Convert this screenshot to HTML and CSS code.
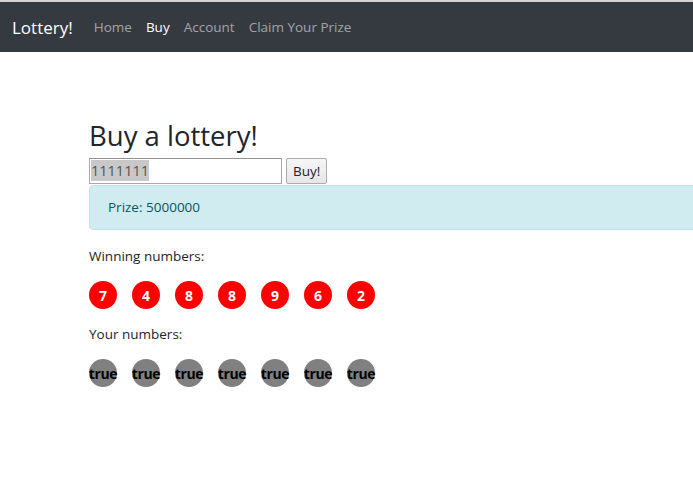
FILE: index.html
```html
<!DOCTYPE html>
<html lang="en">
<head>
<meta charset="utf-8">
<title>Lottery!</title>
<link rel="stylesheet" href="styles.css">
</head>
<body>
<nav class="navbar">
  <a class="brand" href="#">Lottery!</a>
  <ul class="nav">
    <li><a class="nav-link" href="#">Home</a></li>
    <li><a class="nav-link active" href="#">Buy</a></li>
    <li><a class="nav-link" href="#">Account</a></li>
    <li><a class="nav-link" href="#">Claim Your Prize</a></li>
  </ul>
</nav>
<main class="content">
  <h2 class="title">Buy a lottery!</h2>
  <form class="buy-form">
    <div class="fake-input"><span class="selected">1111111</span></div>
    <button type="button" class="buy-btn">Buy!</button>
  </form>
  <div class="alert">Prize: 5000000</div>
  <p class="label first">Winning numbers:</p>
  <div class="balls">
    <span class="ball red">7</span>
    <span class="ball red">4</span>
    <span class="ball red">8</span>
    <span class="ball red">8</span>
    <span class="ball red">9</span>
    <span class="ball red">6</span>
    <span class="ball red">2</span>
  </div>
  <p class="label">Your numbers:</p>
  <div class="balls">
    <span class="ball grey">true</span>
    <span class="ball grey">true</span>
    <span class="ball grey">true</span>
    <span class="ball grey">true</span>
    <span class="ball grey">true</span>
    <span class="ball grey">true</span>
    <span class="ball grey">true</span>
  </div>
</main>
</body>
</html>
```
FILE: styles.css
```css
html, body {
  margin: 0;
  padding: 0;
}
body {
  font-family: "Open Sans", "Noto Sans", sans-serif;
  font-size: 13.5px;
  color: #212529;
  background: #fff;
  overflow-x: hidden;
  border-top: 2px solid #d4d4d4;
}
.navbar {
  height: 50px;
  background: #343a40;
  display: flex;
  align-items: center;
  padding: 0 12px;
}
.brand {
  color: #fff;
  text-decoration: none;
  font-size: 17px;
  margin-right: 14px;
}
.nav {
  display: flex;
  list-style: none;
  margin: 0;
  padding: 0;
}
.nav-link {
  display: block;
  color: rgba(255,255,255,.55);
  text-decoration: none;
  font-size: 13.5px;
  padding: 0 7px;
}
.nav-link.active {
  color: #fff;
}
.content {
  padding-left: 89px;
  padding-top: 64px;
  overflow: hidden;
}
.title {
  margin: 0;
  font-size: 27.5px;
  font-weight: 400;
  line-height: 40px;
}
.buy-form {
  display: flex;
  align-items: center;
  gap: 4px;
  margin-top: 2px;
}
.fake-input {
  width: 189px;
  height: 22px;
  border: 1px solid #a9a9a9;
  border-top-color: #8f8f8f;
  padding: 1px 1px;
  font-size: 14.5px;
  line-height: 22px;
  color: #555;
  background: #fff;
}
.selected {
  background: #c8c8c8;
  padding: 1px 0;
}
.buy-btn {
  height: 26px;
  padding: 0 6px;
  font-family: inherit;
  font-size: 13.5px;
  color: #222;
  background: linear-gradient(#f6f6f6, #e6e6e6);
  border: 1px solid #adadad;
  border-radius: 2px;
}
.alert {
  margin-top: 1px;
  width: 700px;
  padding: 11px 18px 12px;
  line-height: 20px;
  background: #d1ecf1;
  border: 1px solid #bee5eb;
  border-radius: 4px;
  color: #0c5460;
}
.label {
  margin: 14px 0;
  line-height: 22px;
}
.label.first {
  margin-top: 15px;
}
.balls {
  display: flex;
  gap: 15px;
}
.ball {
  width: 28px;
  height: 28px;
  border-radius: 50%;
  display: flex;
  align-items: center;
  justify-content: center;
  font-weight: 700;
  font-size: 14px;
}
.ball.red {
  background: #ff0000;
  color: #fff;
}
.ball.grey {
  background: #808080;
  color: #000;
  letter-spacing: -0.4px;
}
```
